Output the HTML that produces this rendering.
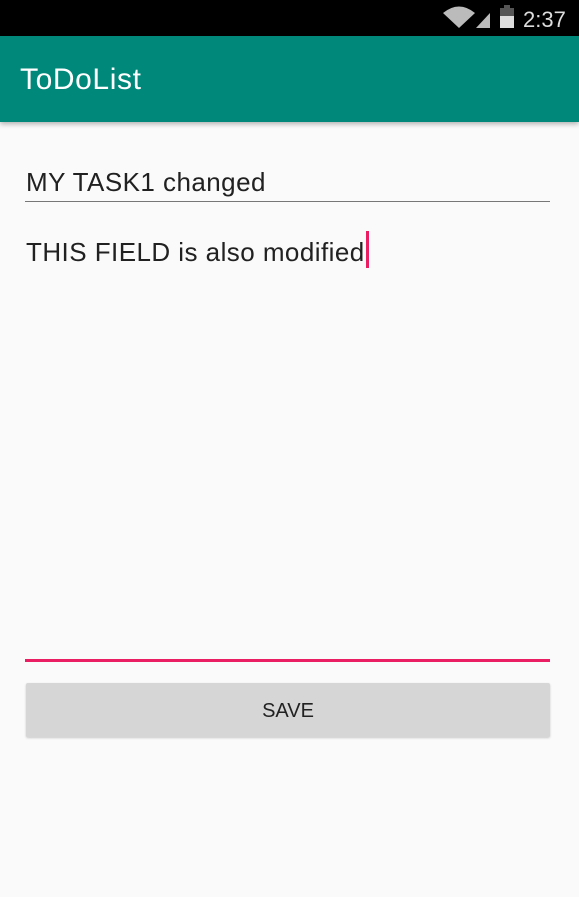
<!DOCTYPE html>
<html><head><style>
body{margin:0;width:579px;height:897px;background:#fafafa;font-family:"Liberation Sans",sans-serif;position:relative;overflow:hidden}
.sb{position:absolute;left:0;top:0;width:579px;height:36px;background:#000}
.ab{position:absolute;left:0;top:36px;width:579px;height:86px;background:#00897b;box-shadow:0 2px 5px rgba(0,0,0,.3)}
.ab span{position:absolute;left:20px;top:27px;color:#fff;font-size:30px;letter-spacing:0.6px}
.t{position:absolute;color:#212121;font-size:26px;left:26px;letter-spacing:0.45px}
</style></head><body>
<div class="sb">
<svg width="579" height="36" style="position:absolute;left:0;top:0">
<path d="M443 13 Q459 0 475 13 L459 28 Z" fill="#bbb"/>
<path d="M476 28 L490 13 L490 28 Z" fill="#bbb"/>
<rect x="500" y="8" width="14" height="20" fill="#555"/>
<rect x="500" y="16" width="14" height="12" fill="#ddd"/>
<rect x="504" y="5" width="6" height="3" fill="#555"/>
<text x="523" y="27" fill="#ddd" font-size="22" font-family="Liberation Sans">2:37</text>
</svg></div>
<div class="ab"><span>ToDoList</span></div>
<div class="t" style="top:167px">MY TASK1 changed</div>
<div style="position:absolute;left:25px;top:201px;width:525px;height:1px;background:#777"></div>
<div class="t" style="top:237px">THIS FIELD is also modified</div>
<div style="position:absolute;left:366px;top:231px;width:3px;height:37px;background:#e91e63"></div>
<div style="position:absolute;left:25px;top:659px;width:525px;height:3px;background:#e91e63"></div>
<div style="position:absolute;left:26px;top:683px;width:524px;height:54px;background:#d6d6d6;border-radius:2px;box-shadow:0 1px 2px rgba(0,0,0,.2);text-align:center;line-height:57px;font-size:20px;color:#222">SAVE</div>
</body></html>
